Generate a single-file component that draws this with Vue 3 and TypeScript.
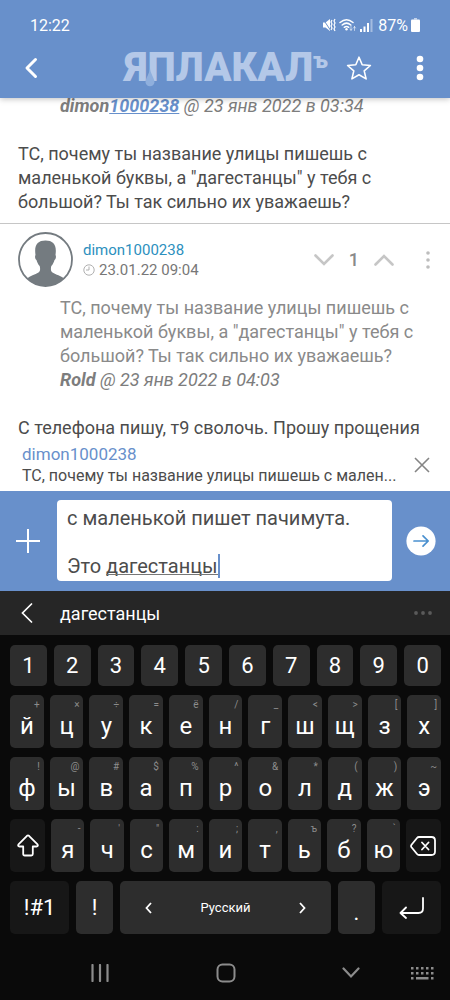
<script setup lang="ts">
import { ref } from 'vue'

interface Key {
  label: string
  hint: string
}

const toKeys = (labels: string, hints: string[]): Key[] =>
  [...labels].map((label, i) => ({ label, hint: hints[i] ?? '' }))

const digits: string[] = [...'1234567890']
const topRow = toKeys('йцукенгшщзх', ['+', '×', '÷', '=', 'ё', '/', '_', '<', '>', '[', ']'])
const homeRow = toKeys('фывапролджэ', ['!', '@', '#', '$', '%', '^', '&', '*', '(', ')', '~'])
const bottomRow = toKeys('ячсмитьбю', ['-', "'", '"', ':', ';', ',', 'ъ', '?', '`'])

const draft = ref('с маленькой пишет пачимута.\n\nЭто дагестанцы')
const question =
  'ТС, почему ты название улицы пишешь с маленькой буквы, а "дагестанцы" у тебя с большой? Ты так сильно их уважаешь?'
const excerpt = question.slice(0, 43) + '...'
</script>

<template>
  <div class="screen">
    <header class="header">
      <div class="status">
        <span class="clock">12:22</span>
        <div class="indicators">
          <svg width="14" height="14" viewBox="0 0 14 14" fill="none" stroke="#fff">
            <path d="M1 4.500h2.500L8 1v12L3.500 9.500H1z" fill="#fff" stroke="none" />
            <path d="M1 1l8 12" stroke="#6890cb" stroke-width="1" />
            <path d="M10 2l-1 2 1 2-1 2 1 2-1 2M13 1l-1 2 1 2-1 2 1 2-1 2 1 2" stroke-width="1.200" />
          </svg>
          <svg width="18" height="14" viewBox="0 0 18 14" fill="none" stroke="#fff" stroke-linecap="round">
            <path d="M1 4.500Q7.500-1 14 4.500M3.200 7Q7.500 3.300 11.800 7M5.300 9.300Q7.500 7.500 9.700 9.300" stroke-width="1.500" />
            <circle cx="7.500" cy="11.300" r="1.200" fill="#fff" stroke="none" />
            <path d="M12 8v4M11 11l1 1.500 1-1.500M15.500 12.500v-4M14.500 10l1-1.500 1 1.500" stroke-width="0.800" opacity=".7" />
          </svg>
          <svg width="13" height="13" viewBox="0 0 13 13" fill="#fff">
            <path d="M0 10h2v3H0zM3.500 7.500h2V13h-2zM7 4h2v9H7z" />
            <path d="M10.500 0h2v13h-2z" opacity=".4" />
          </svg>
          <span class="percent">87%</span>
          <svg width="9" height="14" viewBox="0 0 9 14" fill="#fff">
            <path d="M3 0h3v1.500H3z" opacity=".6" />
            <rect y="1.500" width="9" height="12.500" rx="1" />
          </svg>
        </div>
      </div>
      <div class="appbar">
        <button class="plain back" aria-label="Назад">
          <svg width="14" height="22" viewBox="0 0 14 22" fill="none" stroke="#fff" stroke-width="3" stroke-linecap="round" stroke-linejoin="round">
            <path d="M11.500 2.500L3 11l8.500 8.500" />
          </svg>
        </button>
        <a class="logo" href="#">ЯПЛАКАЛ<span class="sup">ъ</span>
          <svg class="drop" width="10" height="20" viewBox="0 0 10 20"><path d="M5 0C5 5 .500 10 .500 14.500a4.600 4.600 0 0 0 9 0C9.500 10 5 5 5 0z" fill="#8fafdd" /></svg>
        </a>
        <button class="plain star" aria-label="В избранное">
          <svg width="26" height="26" viewBox="0 0 26 26" fill="none" stroke="#fff" stroke-width="1.600" stroke-linejoin="round">
            <path d="M13 2.200l3.200 7.600 8.200.700-6.200 5.400 1.900 8L13 19.700l-7.100 4.200 1.900-8-6.200-5.400 8.200-.700z" />
          </svg>
        </button>
        <button class="plain menu" aria-label="Меню">
          <svg width="8" height="26" viewBox="0 0 8 26" fill="#fff"><circle cx="4" cy="4" r="3.300" /><circle cx="4" cy="13" r="3.300" /><circle cx="4" cy="22" r="3.300" /></svg>
        </button>
      </div>
    </header>

    <main class="feed">
      <article class="post first">
        <p class="quote cite"><b>dimon<a href="#">1000238</a></b> @ 23 янв 2022 в 03:34</p>
        <p class="text">{{ question }}</p>
      </article>
      <article class="post">
        <div class="author">
          <svg class="avatar" width="55" height="55" viewBox="0 0 55 55">
            <circle cx="27.500" cy="27.500" r="26.500" fill="#fff" stroke="#747b80" stroke-width="1.800" />
            <path d="M9 46.500C12 43.500 17 43 20.500 40.500c2-1.500 1.800-4 1.200-6.500-1.700-1.700-2.700-4-3.200-6-1.400-.500-1.900-3.800-1-5-1.500-10 2-14.500 10-14.500S39 13 37.500 23c.9 1.200.4 4.500-1 5-.5 2-1.500 4.300-3.200 6-.6 2.500-.8 5 1.200 6.500 3.500 2.500 8.500 3 11.500 6A26.500 26.500 0 0 1 9 46.500z" fill="#747b80" />
          </svg>
          <div class="who">
            <a class="nick" href="#">dimon1000238</a>
            <span class="date">
              <svg width="12" height="12" viewBox="0 0 12 12" fill="none" stroke="#b0b0b0"><circle cx="6" cy="6" r="5.200" /><path d="M6 2.500V6H3" /></svg>
              23.01.22 09:04
            </span>
          </div>
          <div class="votes">
            <button class="plain" aria-label="Минус">
              <svg width="20" height="12" viewBox="0 0 20 12" fill="none" stroke="#c6c6c6" stroke-width="2.600" stroke-linecap="round"><path d="M1.500 1.500L10 10l8.500-8.500" /></svg>
            </button>
            <span class="score">1</span>
            <button class="plain" aria-label="Плюс">
              <svg width="20" height="12" viewBox="0 0 20 12" fill="none" stroke="#c6c6c6" stroke-width="2.600" stroke-linecap="round"><path d="M1.500 10.500L10 2l8.500 8.500" /></svg>
            </button>
            <button class="plain more" aria-label="Ещё">
              <svg width="4" height="18" viewBox="0 0 4 18" fill="#bdbdbd"><circle cx="2" cy="2" r="1.800" /><circle cx="2" cy="9" r="1.800" /><circle cx="2" cy="16" r="1.800" /></svg>
            </button>
          </div>
        </div>
        <blockquote class="quote">
          {{ question }}
          <p class="cite"><b>Rold</b> @ 23 янв 2022 в 04:03</p>
        </blockquote>
        <p class="text">С телефона пишу, т9 сволочь. Прошу прощения</p>
      </article>
    </main>

    <section class="reply">
      <div class="preview">
        <a class="to" href="#">dimon1000238</a>
        <p class="excerpt">{{ excerpt }}</p>
      </div>
      <button class="plain" aria-label="Закрыть">
        <svg width="16" height="16" viewBox="0 0 16 16" stroke="#858585" stroke-width="1.600"><path d="M1 1l14 14M15 1L1 15" /></svg>
      </button>
    </section>

    <form class="composer" @submit.prevent>
      <button type="button" class="plain" aria-label="Прикрепить">
        <svg width="24" height="24" viewBox="0 0 24 24" stroke="#fff" stroke-width="2"><path d="M12 0v24M0 12h24" /></svg>
      </button>
      <div class="field">
        <textarea v-model="draft" rows="3" aria-label="Сообщение"></textarea>
        <span class="composing"></span>
      </div>
      <button class="plain" aria-label="Отправить">
        <svg width="30" height="30" viewBox="0 0 30 30" fill="none" stroke="#4a90cf" stroke-width="1.700" stroke-linecap="round" stroke-linejoin="round">
          <circle cx="15" cy="15" r="14.600" fill="#fff" stroke="none" />
          <path d="M8 15h14M17 9.800l5.200 5.200-5.200 5.200" />
        </svg>
      </button>
    </form>

    <div class="suggestions">
      <button class="plain" aria-label="Свернуть">
        <svg width="12" height="20" viewBox="0 0 12 20" fill="none" stroke="#fff" stroke-width="1.700" stroke-linecap="round"><path d="M10.500 1L1.500 10l9 9" /></svg>
      </button>
      <button class="plain word">дагестанцы</button>
      <button class="plain" aria-label="Ещё варианты">
        <svg width="18" height="4" viewBox="0 0 18 4" fill="#5a5a5a"><circle cx="2" cy="2" r="1.900" /><circle cx="9" cy="2" r="1.900" /><circle cx="16" cy="2" r="1.900" /></svg>
      </button>
    </div>

    <section class="keyboard">
      <div class="row wide">
        <button v-for="d in digits" :key="d" class="key digit">{{ d }}</button>
      </div>
      <div class="row">
        <button v-for="k in topRow" :key="k.label" class="key letter">{{ k.label }}<span class="hint">{{ k.hint }}</span></button>
      </div>
      <div class="row">
        <button v-for="k in homeRow" :key="k.label" class="key letter">{{ k.label }}<span class="hint">{{ k.hint }}</span></button>
      </div>
      <div class="row">
        <button class="key dark side" aria-label="Shift">
          <svg width="22" height="23" viewBox="0 0 22 23" fill="none" stroke="#fff" stroke-width="1.800" stroke-linejoin="round"><path d="M10 1.800Q11 1 12 1.800l8.500 8.500Q21.500 12.500 19.500 12.500H15.800V20q0 1.500-1.500 1.500H7.700Q6.200 21.500 6.200 20V12.500H2.500Q.500 12.500 1.500 10.300z" /></svg>
        </button>
        <button v-for="k in bottomRow" :key="k.label" class="key letter">{{ k.label }}<span class="hint">{{ k.hint }}</span></button>
        <button class="key dark side" aria-label="Удалить">
          <svg width="26" height="20" viewBox="0 0 26 20" fill="none" stroke="#fff" stroke-width="1.800" stroke-linejoin="round" stroke-linecap="round"><path d="M9 1h12.500Q25 1 25 4.500v11Q25 19 21.500 19H9Q7.800 19 7 18L1.500 11.300Q.600 10 1.500 8.700L7 2Q7.800 1 9 1zM12 6.500l6.500 7M18.500 6.500l-6.500 7" /></svg>
        </button>
      </div>
      <div class="row wide">
        <button class="key dark edge">!#1</button>
        <button class="key mark">!</button>
        <button class="key space">
          <svg width="7" height="12" viewBox="0 0 7 12" fill="none" stroke="#fff" stroke-width="1.800"><path d="M6 1L1.500 6 6 11" /></svg>
          Русский
          <svg width="7" height="12" viewBox="0 0 7 12" fill="none" stroke="#fff" stroke-width="1.800"><path d="M1 1l4.500 5L1 11" /></svg>
        </button>
        <button class="key mark dot">.</button>
        <button class="key dark edge" aria-label="Ввод">
          <svg width="26" height="22" viewBox="0 0 26 22" fill="none" stroke="#fff" stroke-width="1.800" stroke-linecap="round" stroke-linejoin="round"><path d="M24 1v10.500Q24 16 19.500 16H1.500M7 10.500L1.500 16 7 21" /></svg>
        </button>
      </div>
    </section>

    <nav class="nav">
      <button class="plain" aria-label="Недавние">
        <svg width="18" height="18" viewBox="0 0 18 18" stroke="#8c8c8c" stroke-width="2.200" stroke-linecap="round"><path d="M1.500 1v16M9 1v16M16.500 1v16" /></svg>
      </button>
      <button class="plain" aria-label="Домой">
        <svg width="20" height="20" viewBox="0 0 20 20" fill="none" stroke="#8c8c8c" stroke-width="2"><rect x="1.500" y="1.500" width="17" height="17" rx="5" /></svg>
      </button>
      <button class="plain" aria-label="Скрыть клавиатуру">
        <svg width="18" height="12" viewBox="0 0 18 12" fill="none" stroke="#8c8c8c" stroke-width="2.200" stroke-linecap="round"><path d="M1.500 1.500L9 9.500l7.500-8" /></svg>
      </button>
      <button class="plain switcher" aria-label="Выбор клавиатуры">
        <svg width="23" height="13" viewBox="0 0 23 13" fill="#8c8c8c">
          <path d="M0 0h2.500v2.500H0zM5 0h2.500v2.500H5zM10 0h2.500v2.500H10zM15 0h2.500v2.500H15zM20 0h2.500v2.500H20zM0 5h2.500v2.500H0zM5 5h2.500v2.500H5zM10 5h2.500v2.500H10zM15 5h2.500v2.500H15zM20 5h2.500v2.500H20zM0 10h2.500v2.500H0zM5 10h12.500v2.500H5zM20 10h2.500v2.500H20z" />
        </svg>
      </button>
    </nav>
  </div>
</template>

<style>
body {
  background: #0a0a0a;
}
</style>

<style scoped>
.screen {
  display: flex;
  flex-direction: column;
  min-height: 100vh;
  background: #0a0a0a;
  font-family: Roboto, "Noto Sans", sans-serif;
  color: #4c4c4c;
}
.screen * {
  box-sizing: border-box;
}
button,
textarea {
  font-family: inherit;
}
p,
blockquote {
  margin: 0;
}
a {
  text-decoration: none;
}
svg {
  display: block;
  flex: none;
}
.plain {
  padding: 0;
  border: 0;
  background: none;
  color: inherit;
}
.header {
  position: relative;
  z-index: 1;
  background: #6890cb;
  color: #fff;
  box-shadow: 0 1px 6px rgba(0, 0, 0, 0.25);
}
.status {
  display: flex;
  justify-content: space-between;
  align-items: center;
  height: 38px;
  padding: 12px 30px 0;
  font-size: 16px;
}
.indicators {
  display: flex;
  align-items: center;
  gap: 3px;
}
.percent {
  margin-left: 2px;
}
.appbar {
  display: flex;
  align-items: center;
  height: 60px;
  padding: 0 26px 0 24px;
}
.logo {
  position: relative;
  display: flex;
  align-items: flex-start;
  margin-left: auto;
  font-size: 40px;
  line-height: 40px;
  font-weight: 900;
  color: #b4c8e8;
}
.sup {
  font-size: 22px;
  line-height: 26px;
}
.drop {
  position: absolute;
  left: 20px;
  bottom: 0;
}
.star {
  margin-left: 18px;
}
.menu {
  margin-left: 44px;
}
.feed {
  flex: 1;
  margin-top: -4px;
  overflow: hidden;
  background: #fff;
  font-size: 18px;
  line-height: 24px;
}
.post {
  padding: 8px 18px 0;
}
.first {
  padding: 0 18px 9px;
  border-bottom: 1px solid #c6c6c6;
}
.quote {
  margin-left: 42px;
  color: #8a8a8a;
}
.cite {
  font-style: italic;
  color: #7d7d7d;
}
.cite a {
  color: #6890cb;
  text-decoration: underline;
}
.text {
  margin-top: 24px;
}
.author {
  display: flex;
  align-items: center;
  margin-bottom: 9px;
}
.who {
  display: flex;
  flex-direction: column;
  margin-left: 10px;
  font-size: 15px;
  line-height: 20px;
}
.nick {
  color: #2c90be;
}
.date {
  display: flex;
  align-items: center;
  gap: 4px;
  color: #777;
}
.votes {
  display: flex;
  align-items: center;
  margin-left: auto;
  gap: 15px;
  margin-right: 2px;
}
.score {
  font-weight: 500;
  color: #8a8a8a;
}
.more {
  margin-left: 17px;
}
.reply {
  display: flex;
  align-items: center;
  justify-content: space-between;
  padding: 2px 20px 4px 22px;
  background: #fff;
}
.preview {
  flex: 1;
}
.to {
  display: block;
  font-size: 17px;
  line-height: 22px;
  color: #6890cb;
}
.excerpt {
  font-size: 16px;
  line-height: 22px;
}
.composer {
  display: flex;
  align-items: center;
  padding: 9px 14px 10px 16px;
  gap: 14px;
  background: #6890cb;
}
.field {
  position: relative;
  flex: 1;
  height: 81px;
  margin-left: 3px;
}
textarea {
  display: block;
  width: 100%;
  height: 100%;
  padding: 6px 10px 0;
  border: 0;
  border-radius: 4px;
  outline: 0;
  resize: none;
  overflow: hidden;
  background: #fff;
  font-size: 20px;
  line-height: 24px;
  color: #4c4c4c;
}
.composing {
  position: absolute;
  left: 49px;
  bottom: 3px;
  width: 114px;
  height: 24px;
  border-right: 2px solid #6890cb;
  background: linear-gradient(#777, #777) 0 20px / 100% 1px no-repeat;
}
.suggestions {
  display: flex;
  align-items: center;
  height: 44px;
  padding: 0 18px 0 21px;
  background: #262626;
  color: #fff;
}
.word {
  margin: 0 auto 0 27px;
  font-size: 18px;
}
.keyboard {
  display: grid;
  gap: 9px;
  padding: 10px 9px 0 10px;
}
.row {
  display: flex;
  gap: 6px;
}
.wide {
  gap: 7px;
}
.key {
  position: relative;
  display: flex;
  flex: 1 1 0;
  align-items: center;
  justify-content: center;
  min-width: 0;
  height: 53px;
  padding: 0;
  border: 0;
  border-radius: 5px;
  background: #2d2d2d;
  font-size: 22px;
  color: #fff;
}
.digit {
  height: 41px;
}
.letter {
  padding-top: 9px;
  font-size: 24px;
}
.hint {
  position: absolute;
  top: 4px;
  right: 4px;
  font-size: 10px;
  line-height: 12px;
  color: #8c8c8c;
}
.dark {
  background: #171717;
}
.side {
  flex: 0 0 35px;
}
.edge {
  flex: 0 0 59px;
}
.mark {
  flex: 0 0 37px;
}
.dot {
  padding-top: 10px;
}
.space {
  justify-content: space-between;
  padding: 0 25px;
  font-size: 13px;
}
.nav {
  display: flex;
  align-items: center;
  justify-content: space-between;
  height: 66px;
  padding: 12px 16px 0 91px;
}
.switcher {
  margin-left: -56px;
}
</style>
